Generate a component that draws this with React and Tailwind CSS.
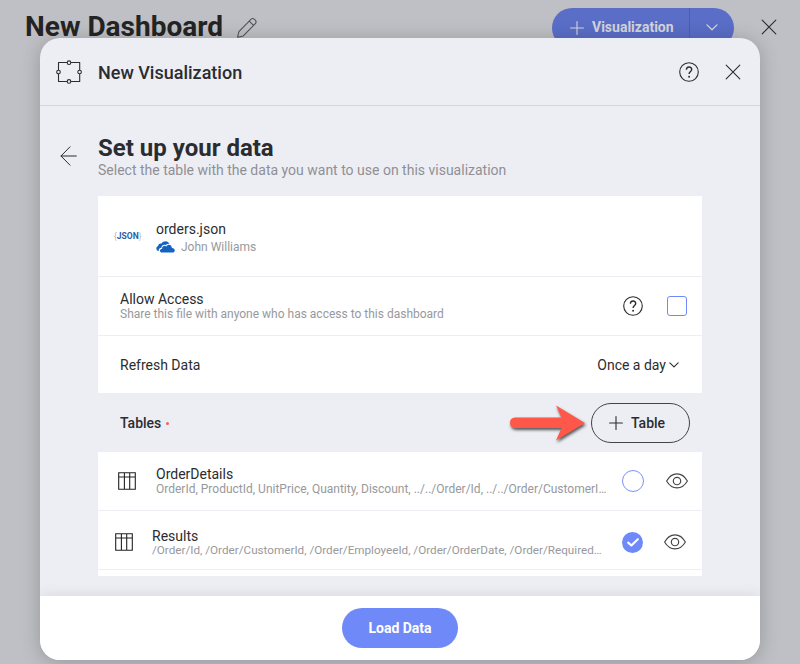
import React from "react";

const line = { fill: "none", stroke: "currentColor", strokeLinecap: "round", strokeLinejoin: "round" };

function Close() {
  return (
    <svg className="block shrink-0" width="16" height="16" viewBox="0 0 16 16" {...line} strokeWidth="1.1">
      <path d="M1.2 1.2 14.8 14.8M14.8 1.2 1.2 14.8" />
    </svg>
  );
}

function Pencil() {
  return (
    <svg className="block shrink-0" width="22" height="22" viewBox="0 0 22 22" {...line} strokeWidth="1.05">
      <path d="M1.6 20.2 2.9 14.6 14.9 2.3Q16.6.6 18.5 2.3L19.3 3.1Q20.9 4.9 19.3 6.6L7.3 18.9ZM13.2 4.1 17.6 8.4" />
    </svg>
  );
}

function Help() {
  return (
    <svg className="block shrink-0" width="20" height="20" viewBox="0 0 20 20" {...line} strokeWidth="1.1">
      <circle cx="10" cy="10" r="9.3" />
      <path d="M7.4 7.8C7.4 4.2 12.7 4.2 12.7 7.5C12.7 9.5 10.1 9.6 10.1 12.1" strokeWidth="1.4" strokeLinecap="butt" />
      <circle cx="10.1" cy="14.8" r="0.95" fill="currentColor" stroke="none" />
    </svg>
  );
}

function Frame() {
  return (
    <svg className="block shrink-0" width="26" height="24" viewBox="0 0 26 24" {...line} strokeWidth="1.1">
      <path d="M11 2.5H2.5V10M2.5 14V21.5H11M15 21.5H23.7V14M23.7 10V2.5H15" strokeLinecap="butt" />
      <circle cx="13" cy="2.7" r="1.8" />
      <circle cx="13" cy="21.4" r="1.8" />
      <circle cx="2.5" cy="12" r="1.8" />
      <circle cx="23.6" cy="12" r="1.8" />
    </svg>
  );
}

function Arrow() {
  return (
    <svg className="block shrink-0" width="17" height="20" viewBox="0 0 17 20" {...line} strokeWidth="1">
      <path d="M16.3 10H1M10 .8 1 10 10 19.2" />
    </svg>
  );
}

function Plus() {
  return (
    <svg className="block shrink-0" width="14" height="14" viewBox="0 0 14 14" {...line} strokeWidth="1.1">
      <path d="M7 .6V13.4M.6 7H13.4" />
    </svg>
  );
}

function Chevron({ className }) {
  return (
    <svg className={className} viewBox="0 0 12 7" {...line} strokeWidth="1.3">
      <path d="M1 .9 6 5.8 11 .9" />
    </svg>
  );
}

function Cloud() {
  return (
    <svg className="block shrink-0" width="19" height="12" viewBox="0 0 19 12" fill="#1463bf">
      <path d="M3 10.1C-.6 9.6-.2 5.5 2.2 5 2.1 2.9 4.1 1.9 5.6 2.6 7.3-.8 12.3-.6 13.4 2.9 11.9 2.6 10.8 3 10 4 7.6 3.1 5.5 4.6 5.4 6.8 3.3 7.1 2.3 8.6 3 10.1Z" />
      <path d="M6.2 11.6C3.2 11.4 3.3 7.9 6.1 7.7 5.9 5.3 8.7 3.9 10.3 5.4 11.8 2.7 15.9 3.6 15.9 7.1 19.7 7.1 19.5 11.6 16.5 11.6Z" />
    </svg>
  );
}

function TableIcon() {
  return (
    <svg className="block shrink-0 text-[#222]" width="18" height="18" viewBox="0 0 18 18" {...line} strokeWidth="1.1" strokeLinejoin="miter">
      <path d="M.7.7H17.3V17.3H.7ZM.7 5H17.3M6.4.7V17.3M11.7.7V17.3" />
    </svg>
  );
}

function Eye() {
  return (
    <svg className="block shrink-0 text-[#444]" width="22" height="16" viewBox="0 0 22 16" {...line} strokeWidth="1.15">
      <path d="M.6 8C6-1.6 16-1.6 21.4 8 16 17.2 6 17.2.6 8Z" />
      <circle cx="11" cy="8" r="3.7" />
    </svg>
  );
}

function Pointer() {
  return (
    <svg className="block shrink-0 overflow-visible drop-shadow-[1px_2px_1.5px_rgba(0,0,0,0.65)]" width="75" height="36" viewBox="0 0 75 36" fill="#ff584a">
      <path d="M5 12.5H51.5L46 .5 75 18 46 35.5 51.5 23H5Q0 22.5 0 17.7 0 13 5 12.5Z" />
    </svg>
  );
}

export default function App() {
  return (
    <div className="relative h-[664px] w-[800px] overflow-hidden bg-[#bfc0c5] font-[Roboto,sans-serif] text-[#2b2c2f]">
      <header className="flex h-[54px] items-center pl-[25px] pr-[23px]">
        <h1 className="w-[198px] whitespace-nowrap text-[28px] leading-[54px] font-bold text-[#242424]">New Dashboard</h1>
        <div className="ml-[13px] mt-[1px] text-[#505154]"><Pencil /></div>
        <div className="ml-auto mt-[1px] flex h-[40px] w-[182px] items-center rounded-full bg-[#5a6ec8] text-[#d5d5da]">
          <div className="flex h-full w-[138px] items-center gap-2 border-r border-[#4c5eb1] pl-[18px]">
            <Plus />
            <span className="text-[14px] font-bold">Visualization</span>
          </div>
          <Chevron className="ml-4 h-[7px] w-3" />
        </div>
        <div className="ml-[27px]"><Close /></div>
      </header>

      <main className="absolute left-[40px] top-[38px] flex h-[622px] w-[720px] flex-col overflow-hidden rounded-[20px] bg-[#edeef4] shadow-[0_2px_20px_rgba(0,0,0,0.22)]">
        <div className="flex h-[68px] shrink-0 items-center border-b border-[#d5d6dc] pl-4 pr-[19px]">
          <Frame />
          <h2 className="ml-4 whitespace-nowrap pt-[2px] text-[18px] font-medium">New Visualization</h2>
          <div className="ml-auto flex items-center gap-[26px]"><Help /><Close /></div>
        </div>

        <div className="flex h-[90px] shrink-0 pl-5">
          <div className="mt-10 w-[38px]"><Arrow /></div>
          <div className="pt-[28px]">
            <h3 className="whitespace-nowrap text-[24px] leading-[28px] font-bold">Set up your data</h3>
            <p className="whitespace-nowrap text-[14px] leading-[17px] text-[#8f9094]">Select the table with the data you want to use on this visualization</p>
          </div>
        </div>

        <section className="ml-[58px] w-[604px] shrink-0">
          <div className="bg-white">
            <div className="flex h-[81px] items-center border-b border-[#edeef4] pl-4">
              <div className="w-[42px] whitespace-nowrap text-[8.5px] leading-none font-bold text-[#2a5ea8]">
                <span className="font-light text-[#999]">{"{"}</span>JSON<span className="font-light text-[#999]">{"}"}</span>
              </div>
              <div className="pt-[3px]">
                <div className="text-[14px] leading-[18px]">orders.json</div>
                <div className="flex items-center gap-[6px] text-[12px] leading-[18px] text-[#98999c]"><Cloud />John Williams</div>
              </div>
            </div>
            <div className="flex h-[59px] items-center border-b border-[#edeef4] pl-[22px] pr-[15px]">
              <div>
                <div className="text-[14px] leading-[16px]">Allow Access</div>
                <div className="text-[12px] leading-[14px] text-[#98999c]">Share this file with anyone who has access to this dashboard</div>
              </div>
              <div className="ml-auto flex items-center gap-6">
                <Help />
                <div className="size-5 rounded-[3px] border border-[#6f8af8]" />
              </div>
            </div>
            <div className="flex h-[57px] items-center pl-[22px] pr-[23px] text-[14px]">
              <span className="pt-[2px]">Refresh Data</span>
              <span className="ml-auto pt-[2px]">Once a day</span>
              <Chevron className="ml-[3px] h-[6px] w-[10px]" />
            </div>
          </div>

          <div className="flex h-[59px] items-center pl-[22px] pr-3">
            <span className="pt-[2px] text-[14px] font-medium">Tables</span>
            <span className="ml-[5px] mt-[2px] size-[3px] rounded-full bg-[#ff5b5b]" />
            <div className="ml-auto mr-[6px]"><Pointer /></div>
            <button className="flex h-[40px] w-[99px] items-center gap-2 rounded-full border border-[#444] pl-[17px] text-[14px] font-medium">
              <Plus /><span className="pt-[2px]">Table</span>
            </button>
          </div>

          <div className="h-[124px] bg-white">
            <div className="flex h-[59px] items-center border-b border-[#edeef4] pl-5 pr-[14px]">
              <TableIcon />
              <div className="ml-5 w-[450px] whitespace-nowrap">
                <div className="text-[14px] leading-[16px]">OrderDetails</div>
                <div className="text-[12px] leading-[14px] text-[#98999c]">OrderId, ProductId, UnitPrice, Quantity, Discount, ../../Order/Id, ../../Order/CustomerI…</div>
              </div>
              <div className="ml-4 size-[22px] rounded-full border border-[#7c93f8]" />
              <div className="ml-auto"><Eye /></div>
            </div>
            <div className="flex h-[59px] items-center border-b border-[#edeef4] pl-[17px] pr-4 pt-[4px]">
              <TableIcon />
              <div className="ml-[19px] w-[450px] whitespace-nowrap">
                <div className="pt-[1px] text-[14px] leading-[15px]">Results</div>
                <div className="text-[11.7px] leading-[13px] text-[#98999c]">/Order/Id, /Order/CustomerId, /Order/EmployeeId, /Order/OrderDate, /Order/Required…</div>
              </div>
              <div className="ml-5 flex size-[21px] items-center justify-center rounded-full bg-[#6f8af8] text-white">
                <svg width="12" height="9" viewBox="0 0 12 9" {...line} strokeWidth="2.1"><path d="M1.2 4.6 4.4 7.5 10.8 1.2" /></svg>
              </div>
              <div className="ml-auto"><Eye /></div>
            </div>
          </div>
        </section>

        <footer className="mt-auto flex h-16 shrink-0 items-center justify-center bg-white shadow-[0_-2px_12px_rgba(0,0,0,0.08)]">
          <button className="h-10 w-[116px] rounded-full bg-[#6f8af8] text-[14px] font-bold text-white">Load Data</button>
        </footer>
      </main>
    </div>
  );
}
